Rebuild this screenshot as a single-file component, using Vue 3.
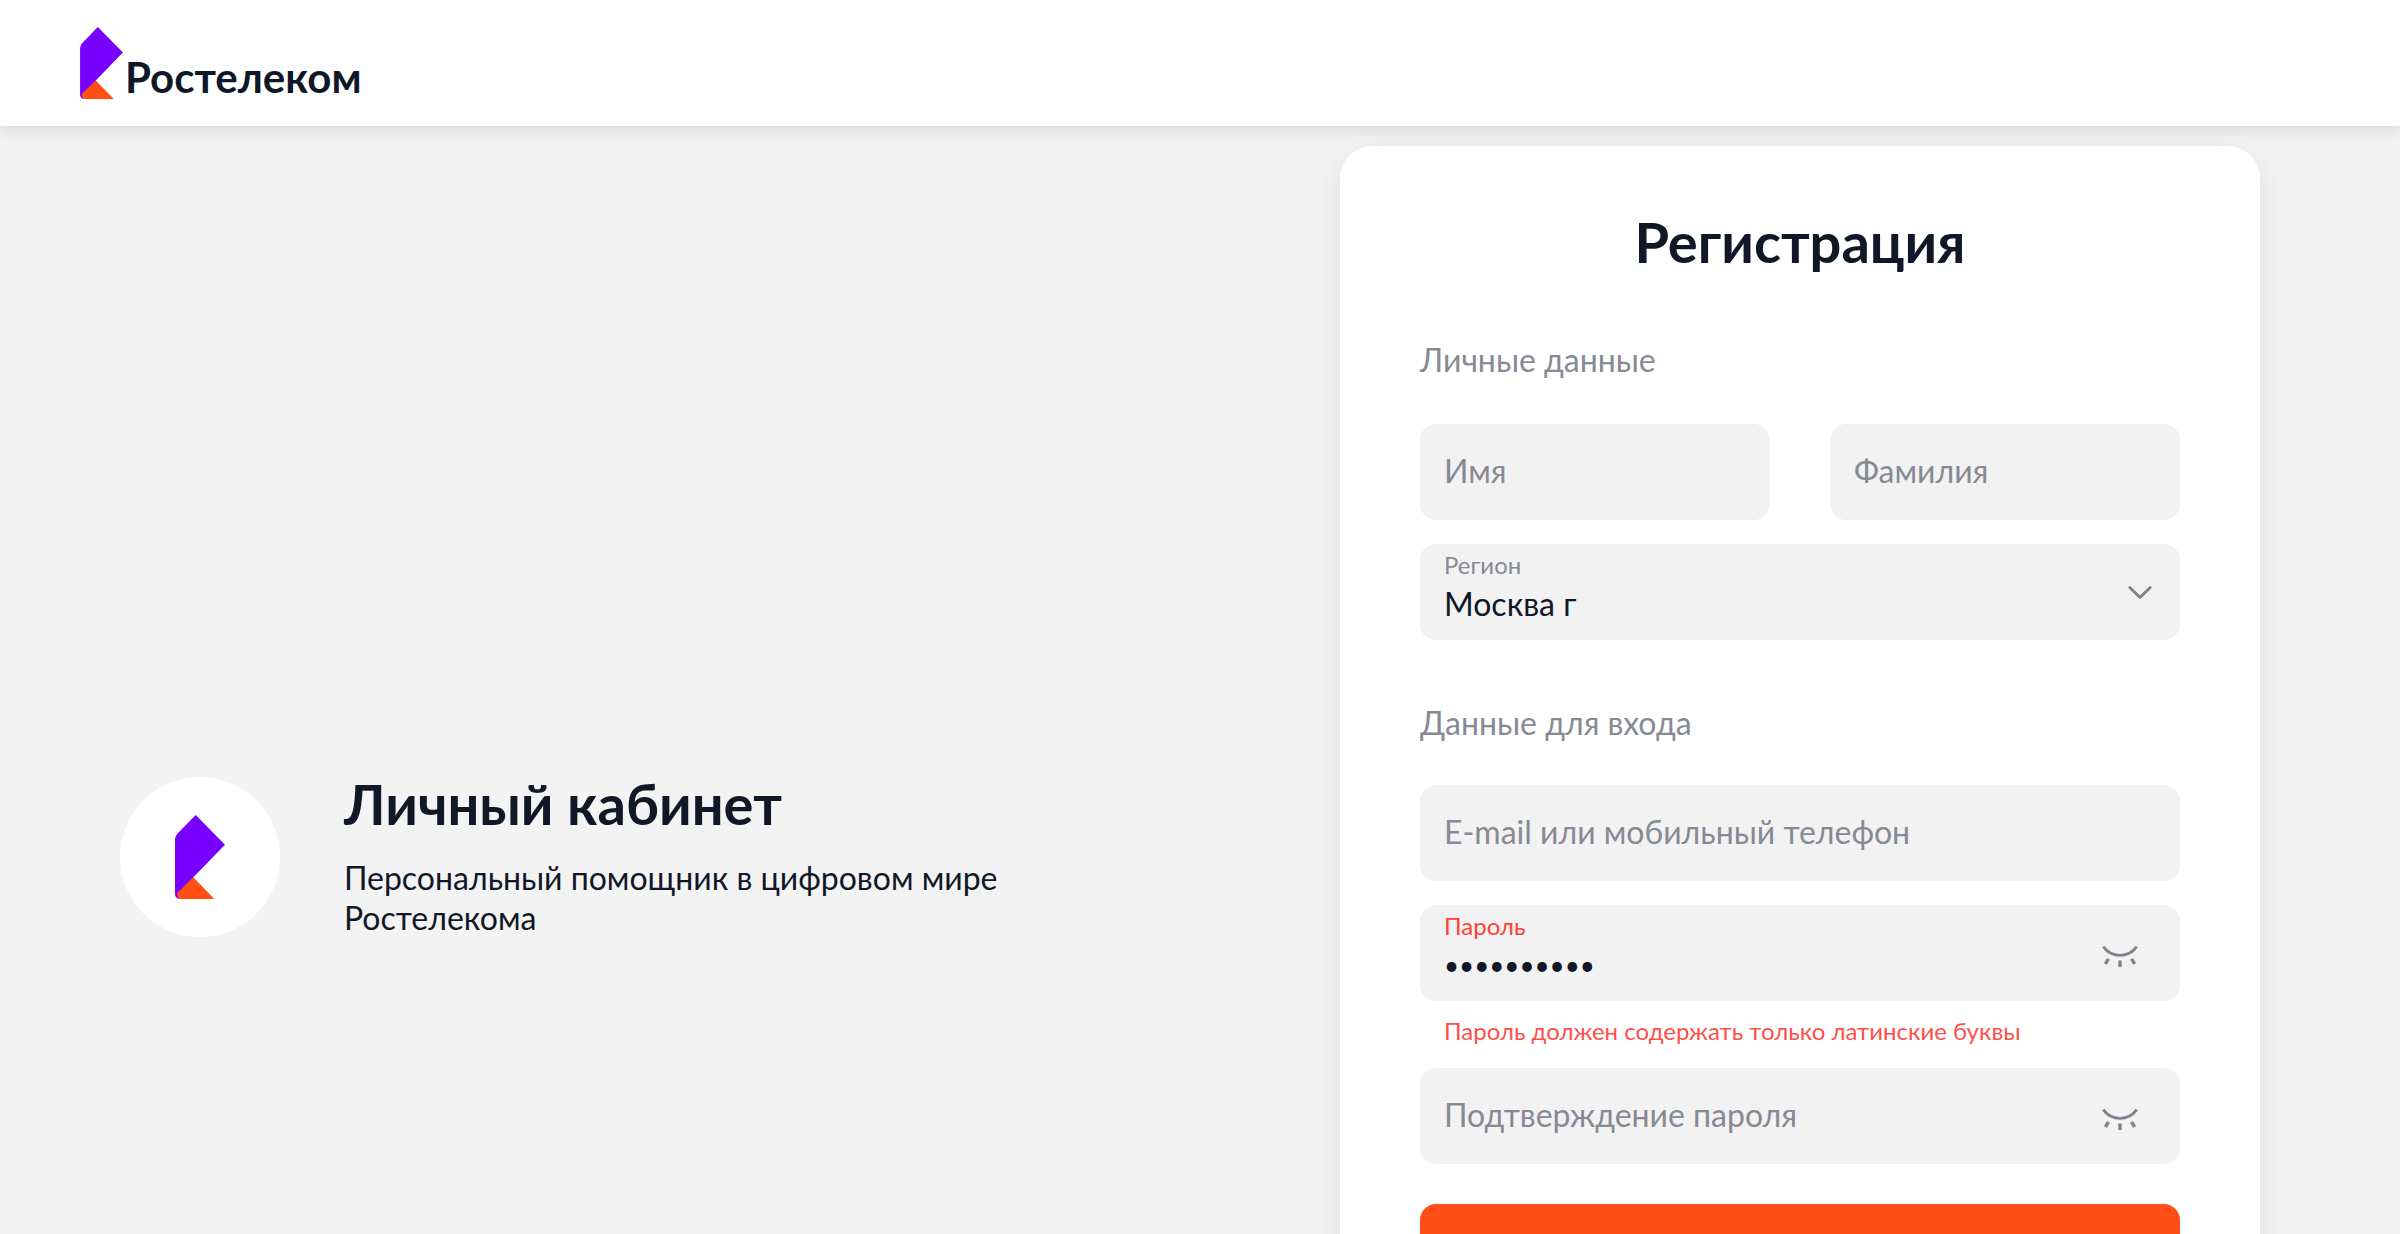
<script setup>
import { ref } from 'vue'

const firstName = ref('')
const lastName = ref('')
const region = ref('Москва г')
const login = ref('')
const password = ref('abcdefghij')
const passwordConfirm = ref('')
const showPassword = ref(false)
const showConfirm = ref(false)
</script>

<template>
  <div class="page">
    <header class="header">
      <a class="brand" href="#">
        <svg class="brand-mark" viewBox="0 0 50 84" aria-hidden="true">
          <path fill="#7700ff" d="M20.7 0 50 29.7 18.3 62.3 4 84C1.6 83.4 0 81.6 0 79V26C0 21.5 1.4 19.7 4.3 16.8Z" />
          <path fill="#ff4f12" d="M18.3 62.3 2.6 77.6C1.4 80.5 3 84 6 84H39.3Z" />
        </svg>
        <span class="brand-name">Ростелеком</span>
      </a>
    </header>

    <main class="content">
      <section class="intro">
        <div class="intro-badge">
          <svg class="intro-mark" viewBox="0 0 50 84" aria-hidden="true">
            <path fill="#7700ff" d="M20.7 0 50 29.7 18.3 62.3 4 84C1.6 83.4 0 81.6 0 79V26C0 21.5 1.4 19.7 4.3 16.8Z" />
            <path fill="#ff4f12" d="M18.3 62.3 2.6 77.6C1.4 80.5 3 84 6 84H39.3Z" />
          </svg>
        </div>
        <div class="intro-text">
          <h2 class="title">Личный кабинет</h2>
          <p class="intro-lead">Персональный помощник в цифровом мире Ростелекома</p>
        </div>
      </section>

      <section class="panel">
        <form class="card" @submit.prevent>
          <h1 class="title card-title">Регистрация</h1>

          <fieldset class="group">
            <legend class="group-name">Личные данные</legend>
            <div class="fields">
              <div class="row">
                <div class="field">
                  <input v-model="firstName" class="control" type="text" placeholder="Имя" aria-label="Имя">
                </div>
                <div class="field">
                  <input v-model="lastName" class="control" type="text" placeholder="Фамилия" aria-label="Фамилия">
                </div>
              </div>
              <div class="field">
                <div class="stack">
                  <label class="label" for="region">Регион</label>
                  <select id="region" v-model="region" class="control">
                    <option>Москва г</option>
                  </select>
                </div>
                <svg class="chevron" viewBox="0 0 32 32" aria-hidden="true">
                  <path d="M5.8 11.6 16 21.6 26.2 11.6" />
                </svg>
              </div>
            </div>
          </fieldset>

          <fieldset class="group">
            <legend class="group-name">Данные для входа</legend>
            <div class="fields">
              <div class="field">
                <input
                  v-model="login" class="control" type="text"
                  placeholder="E-mail или мобильный телефон" aria-label="E-mail или мобильный телефон"
                >
              </div>
              <div class="with-error">
                <div class="field">
                  <div class="stack">
                    <label class="label label-error" for="password">Пароль</label>
                    <input
                      id="password" v-model="password" class="control secret"
                      :type="showPassword ? 'text' : 'password'" aria-describedby="password-error"
                    >
                  </div>
                  <button class="eye" type="button" aria-label="Показать пароль" @click="showPassword = !showPassword">
                    <svg viewBox="0 0 40 40" aria-hidden="true">
                      <path d="M3.2 13.6C11.6 25.2 28.4 25.2 36.8 13.6" />
                      <path class="lash" d="M8.4 25.8 5.4 31M20 27.6V34M31.6 25.8 34.6 31" />
                    </svg>
                  </button>
                </div>
                <p id="password-error" class="error">Пароль должен содержать только латинские буквы</p>
              </div>
              <div class="field">
                <input
                  v-model="passwordConfirm" class="control" :type="showConfirm ? 'text' : 'password'"
                  placeholder="Подтверждение пароля" aria-label="Подтверждение пароля"
                >
                <button class="eye" type="button" aria-label="Показать пароль" @click="showConfirm = !showConfirm">
                  <svg viewBox="0 0 40 40" aria-hidden="true">
                    <path d="M3.2 13.6C11.6 25.2 28.4 25.2 36.8 13.6" />
                    <path class="lash" d="M8.4 25.8 5.4 31M20 27.6V34M31.6 25.8 34.6 31" />
                  </svg>
                </button>
              </div>
            </div>
          </fieldset>

          <button class="submit" type="submit" aria-label="Зарегистрироваться"></button>
        </form>
      </section>
    </main>
  </div>
</template>

<style>
html {
  scrollbar-width: none;
}

body {
  margin: 0;
  background: #f3f3f3;
}
</style>

<style scoped>
.page {
  min-height: 100vh;
  color: #101828;
  font-family: Lato, "Liberation Sans", sans-serif;
  font-size: 32px;
  line-height: 40px;
}

.page *,
.page *::before {
  box-sizing: border-box;
}

.header {
  position: relative;
  padding: 27px 80px;
  background: #fff;
  box-shadow: 0 0 16px rgba(16, 24, 40, 0.18);
}

.brand {
  display: inline-flex;
  align-items: flex-end;
  gap: 2px;
  vertical-align: top;
  color: inherit;
  text-decoration: none;
}

.brand-mark {
  width: 43px;
  height: 72px;
}

.brand-name {
  font-size: 42px;
  font-weight: 700;
  line-height: 44px;
}

.content {
  display: grid;
  grid-template-columns: 1fr 1fr;
}

.intro {
  display: flex;
  align-items: center;
  gap: 64px;
  padding: 0 120px;
}

.intro-badge {
  display: flex;
  flex: none;
  align-items: center;
  justify-content: center;
  width: 160px;
  height: 160px;
  border-radius: 50%;
  background: #fff;
}

.intro-mark {
  width: 50px;
  height: 84px;
}

.title {
  margin: 0;
  font-size: 56px;
  font-weight: 700;
  line-height: 56px;
}

.intro-lead {
  margin: 26px 0 0;
}

.panel {
  padding: 20px 140px;
}

.card {
  padding: 68px 80px 268px;
  border-radius: 32px;
  background: #fff;
  box-shadow: 0 8px 32px rgba(16, 24, 60, 0.09);
}

.card-title {
  margin-bottom: 70px;
  text-align: center;
}

.group {
  min-width: 0;
  margin: 0 0 63px;
  padding: 0;
  border: 0;
}

.group + .group {
  margin-bottom: 40px;
}

.group-name {
  display: block;
  margin-bottom: 42px;
  padding: 0 0 2px;
  line-height: 40px;
  color: #878a94;
}

.group + .group .group-name {
  margin-bottom: 40px;
}

.fields {
  display: flex;
  flex-direction: column;
  gap: 24px;
}

.row {
  display: grid;
  grid-template-columns: 1fr 1fr;
  gap: 60px;
}

.field {
  display: flex;
  align-items: center;
  height: 96px;
  padding: 0 24px;
  border-radius: 16px;
  background: #f2f2f3;
}

.stack {
  display: flex;
  flex: 1;
  flex-direction: column;
  min-width: 0;
}

.label {
  color: #878a94;
  font-size: 24px;
  line-height: 26px;
}

.label-error {
  color: #ff4136;
}

.control {
  flex: 1;
  width: 100%;
  min-width: 0;
  height: 54px;
  padding: 0 0 4px;
  border: 0;
  outline: 0;
  background: none;
  appearance: none;
  color: #101828;
  font: inherit;
}

.stack .control {
  flex: none;
  padding-bottom: 2px;
}

.control::placeholder {
  color: #878a94;
  opacity: 1;
}

.secret {
  font-size: 26px;
}

.chevron {
  flex: none;
  width: 32px;
  height: 32px;
  fill: none;
  stroke: #80838d;
  stroke-width: 2.8;
  stroke-linecap: round;
  stroke-linejoin: round;
}

.eye {
  flex: none;
  width: 40px;
  height: 40px;
  margin-right: 16px;
  padding: 0;
  border: 0;
  background: none;
  cursor: pointer;
}

.eye svg {
  display: block;
  fill: none;
  stroke: #80838d;
  stroke-width: 2.8;
}

.eye .lash {
  stroke-width: 3.4;
}

.with-error {
  display: flex;
  flex-direction: column;
  gap: 16px;
}

.error {
  margin: 0;
  padding: 0 24px;
  color: #ff4f4a;
  font-size: 24px;
  line-height: 27px;
}

.submit {
  display: block;
  width: 100%;
  height: 96px;
  border: 0;
  border-radius: 16px;
  background: #ff4f18;
  cursor: pointer;
}
</style>
